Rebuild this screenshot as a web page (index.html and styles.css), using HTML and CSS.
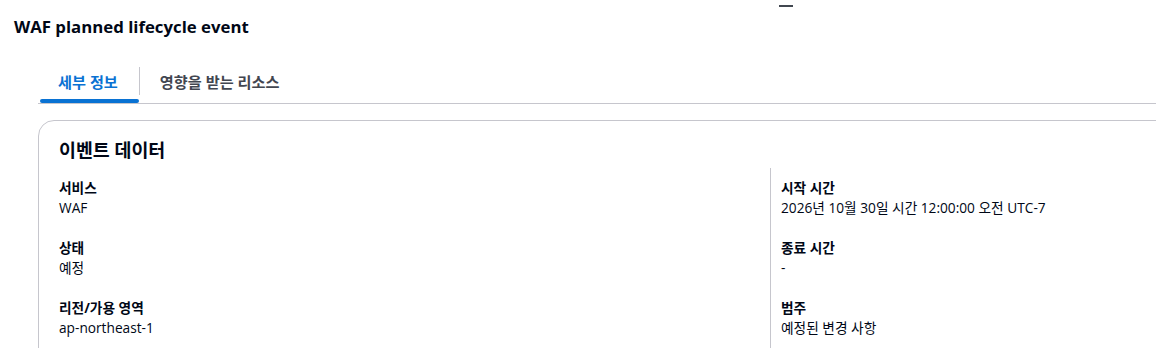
FILE: index.html
```html
<!DOCTYPE html>
<html lang="ko">
<head>
  <meta charset="UTF-8">
  <meta name="viewport" content="width=device-width, initial-scale=1.0">
  <title>WAF planned lifecycle event</title>
  <link rel="stylesheet" href="styles.css">
</head>
<body>
  <div class="page">
    <div class="grip"></div>
    <h1 class="title">WAF planned lifecycle event</h1>

    <div class="tabs">
      <div class="tab active">세부 정보</div>
      <div class="tab-sep"></div>
      <div class="tab">영향을 받는 리소스</div>
    </div>

    <div class="card">
      <h2 class="card-title">이벤트 데이터</h2>
      <div class="columns">
        <div class="col">
          <div class="field">
            <div class="label">서비스</div>
            <div class="value">WAF</div>
          </div>
          <div class="field">
            <div class="label">상태</div>
            <div class="value">예정</div>
          </div>
          <div class="field">
            <div class="label">리전/가용 영역</div>
            <div class="value">ap-northeast-1</div>
          </div>
        </div>
        <div class="col divided">
          <div class="field">
            <div class="label">시작 시간</div>
            <div class="value">2026년 10월 30일 시간 12:00:00 오전 UTC-7</div>
          </div>
          <div class="field">
            <div class="label">종료 시간</div>
            <div class="value">-</div>
          </div>
          <div class="field">
            <div class="label">범주</div>
            <div class="value">예정된 변경 사항</div>
          </div>
        </div>
      </div>
    </div>
  </div>
</body>
</html>
```

FILE: styles.css
```css
body {
  margin: 0;
  background-color: #fff;
  color: #000716;
  font-family: "Open Sans", "Noto Sans CJK KR", sans-serif;
  font-size: 14px;
}

.page {
  height: 348px;
  overflow: hidden;
}

.grip {
  width: 14px;
  height: 2px;
  margin: 5px 0 0 779px;
  background-color: #414750;
}

.title {
  margin: 9px 0 0 14px;
  font-size: 16.8px;
  line-height: 22px;
  font-weight: 700;
}

.tabs {
  display: flex;
  align-items: center;
  margin: 21px 0 0 38px;
  border-bottom: 1px solid #c6c6cd;
  height: 44px;
}

.tab {
  position: relative;
  height: 100%;
  display: flex;
  align-items: center;
  padding: 0 20px;
  font-size: 15.2px;
  font-weight: 700;
  color: #424650;
}

.tab.active {
  color: #0972d3;
  margin-left: 2px;
  padding: 0 21px 0 18px;
}

.tab.active::after {
  content: "";
  position: absolute;
  left: 0;
  right: 0;
  bottom: 0;
  height: 4px;
  border-radius: 2px;
  background-color: #0972d3;
}

.tab-sep {
  width: 1px;
  height: 28px;
  background-color: #c6c6cd;
}

.card {
  margin: 16px 0 0 38px;
  width: 1500px;
  border: 1px solid #c6c6cd;
  border-radius: 16px;
  padding: 16px 0 40px 20px;
}

.card-title {
  margin: 0;
  font-size: 18.4px;
  line-height: 26px;
  font-weight: 700;
}

.columns {
  display: grid;
  grid-template-columns: 711px 711px;
  margin-top: 5px;
}

.col.divided {
  border-left: 1px solid #c6c6cd;
  padding-left: 10px;
}

.field {
  padding: 10px 0;
}

.label {
  font-size: 13.7px;
  line-height: 19px;
  font-weight: 700;
}

.value {
  font-size: 13.7px;
  line-height: 21px;
}
```
